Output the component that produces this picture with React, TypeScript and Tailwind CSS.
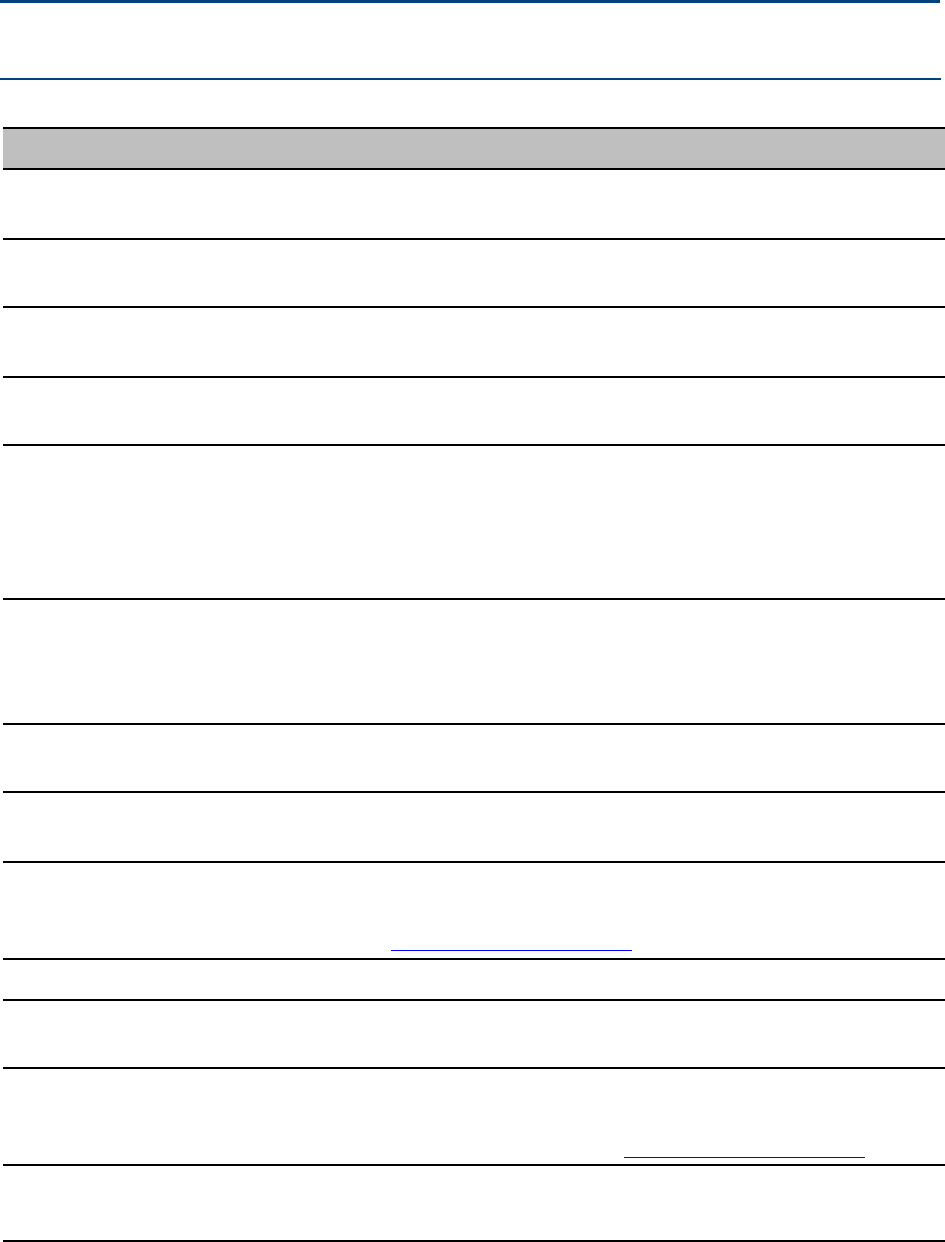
import React from 'react';

// Row heights (border included) taken from the ruled table in the page
const rows = [
  { h: 'h-[70px]' },
  { h: 'h-[68px]' },
  { h: 'h-[70px]' },
  { h: 'h-[68px]' },
  { h: 'h-[154px]' },
  { h: 'h-[125px]' },
  { h: 'h-[68px]' },
  { h: 'h-[70px]' },
  { h: 'h-[97px]', link: 1, pb: 'pb-[7px]' },
  { h: 'h-[41px]' },
  { h: 'h-[68px]' },
  { h: 'h-[97px]', link: 2, pb: 'pb-[6px]' },
  { h: 'h-[76px]' },
];

function LinkLine() {
  return <span className="block shrink-0 w-[241px] border-b border-[#0000ff]" />;
}

export default function App() {
  return (
    <div className="w-[945px] h-[1242px] bg-white overflow-hidden font-['Liberation_Sans',Arial,sans-serif] text-[13px] text-black">
      {/* header rule */}
      <div className="w-[940px] h-[3px] bg-[#00417f]" />
      <div className="h-[75px]" />
      <div className="w-[941px] h-[2px] bg-[#00417f]" />
      <div className="h-[47px]" />

      {/* table */}
      <div className="ml-[3px] w-[942px] border-t-2 border-black">
        <div className="h-[41px] bg-[#bfbfbf] border-b-2 border-black grid grid-cols-[385px_233px_1fr]">
          <div />
          <div />
          <div />
        </div>
        {rows.map((r, i) => (
          <div
            key={i}
            className={`${r.h} border-b-2 border-black grid grid-cols-[385px_233px_1fr]`}
          >
            <div className="px-[3px]" />
            <div className={`px-[3px] flex items-end overflow-visible ${r.link === 1 ? r.pb : ''}`}>
              {r.link === 1 && <LinkLine />}
            </div>
            <div className={`px-[3px] flex items-end ${r.link === 2 ? r.pb : ''}`}>
              {r.link === 2 && <LinkLine />}
            </div>
          </div>
        ))}
      </div>
    </div>
  );
}
